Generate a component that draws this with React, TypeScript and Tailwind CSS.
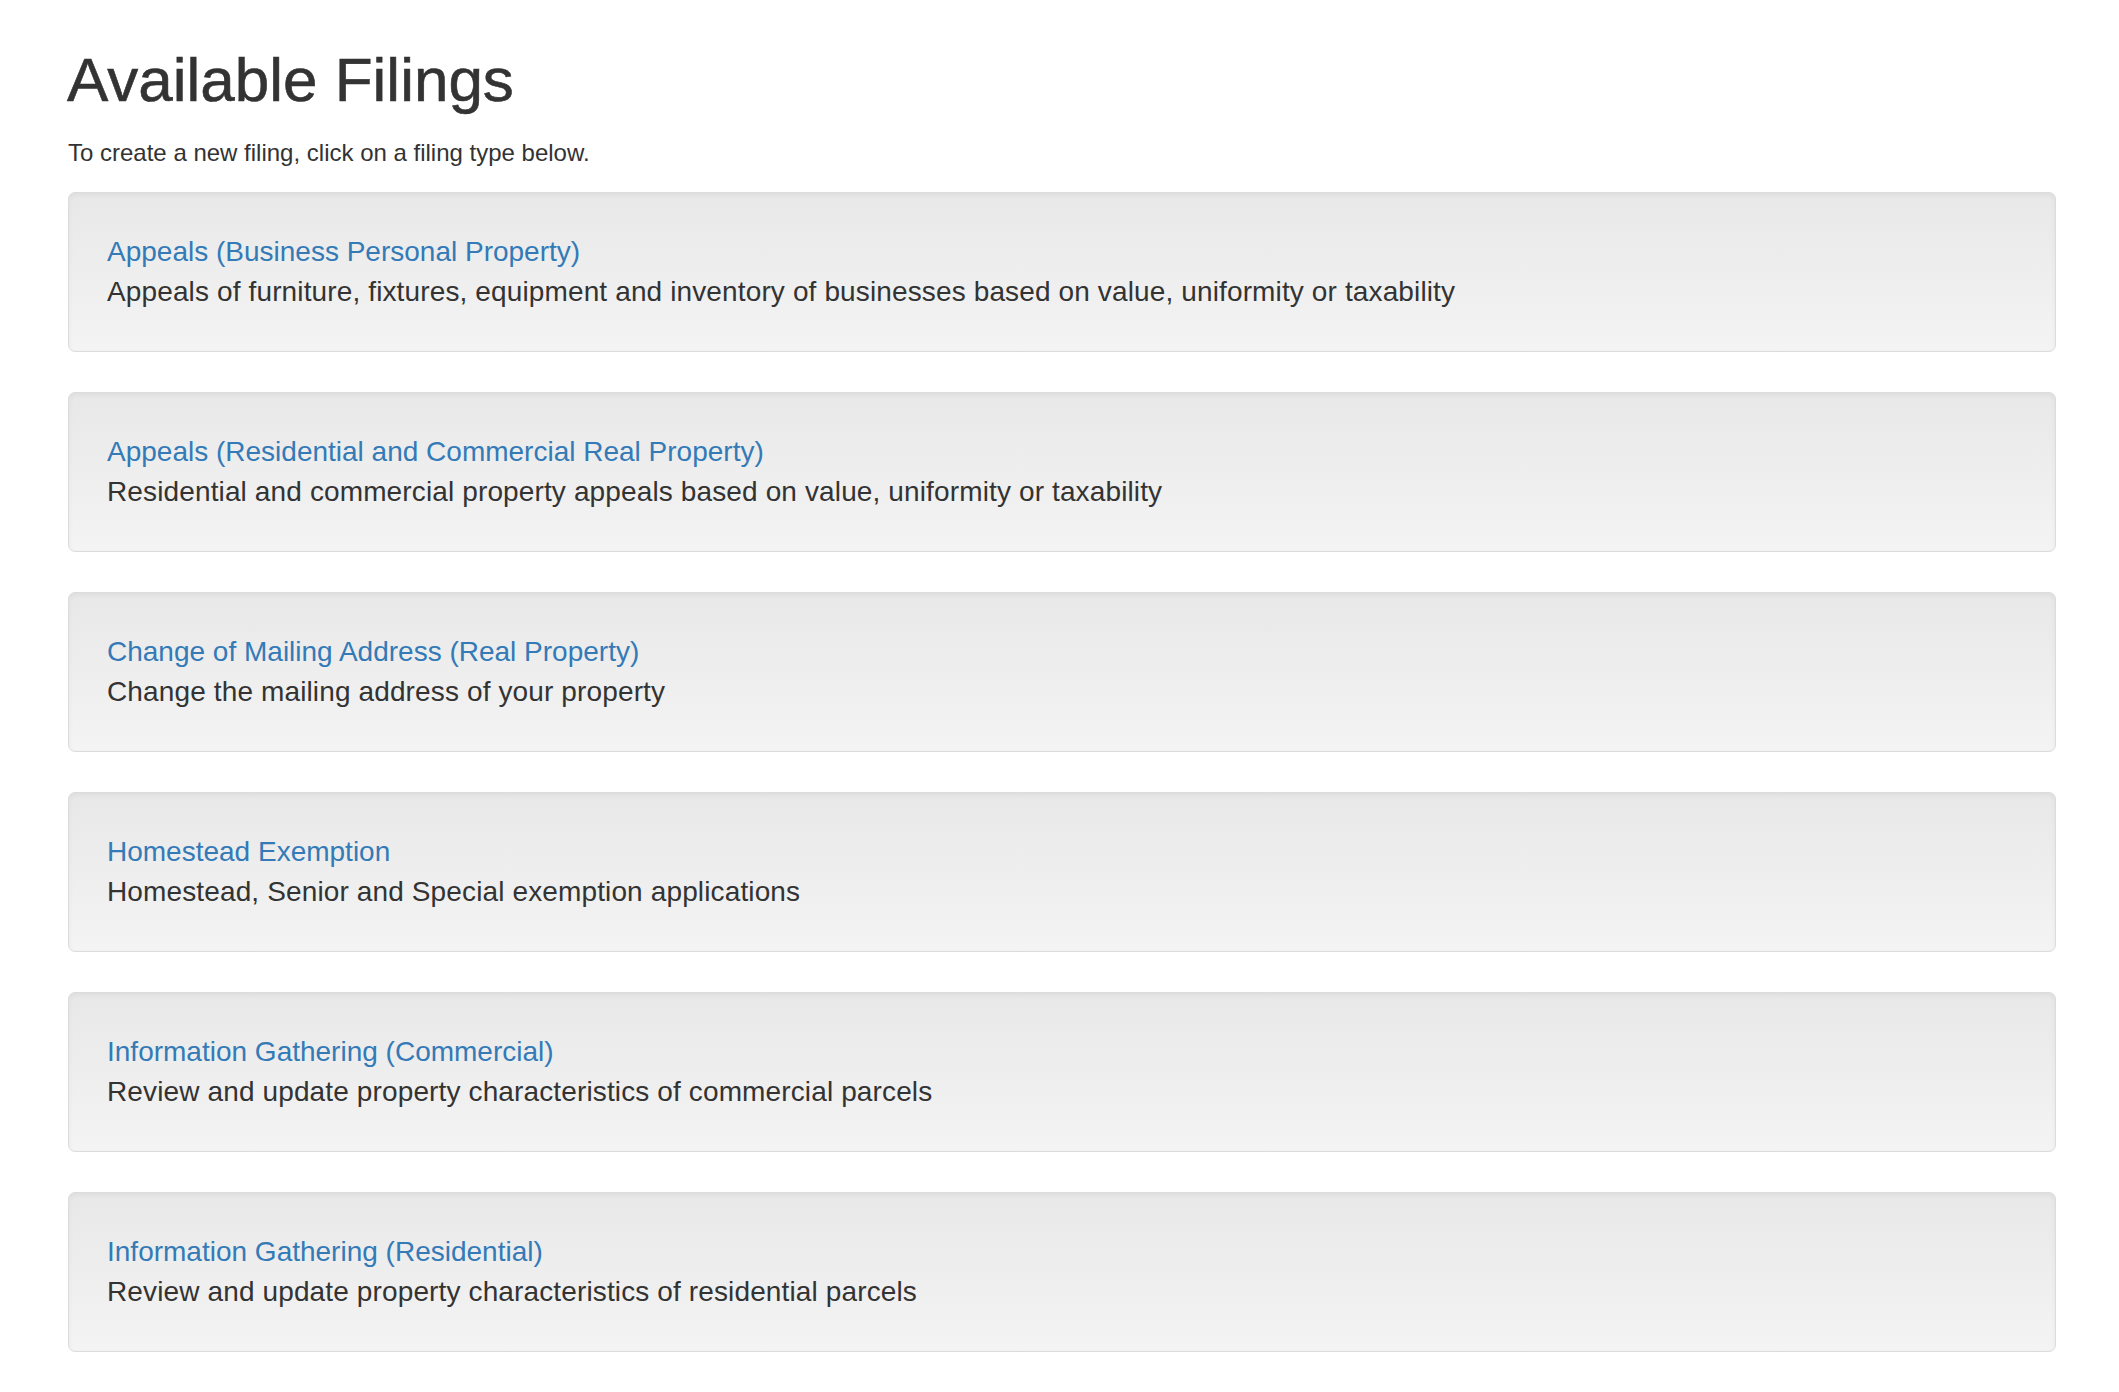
const filings = [
  {
    name: "Appeals (Business Personal Property)",
    description:
      "Appeals of furniture, fixtures, equipment and inventory of businesses based on value, uniformity or taxability",
  },
  {
    name: "Appeals (Residential and Commercial Real Property)",
    description: "Residential and commercial property appeals based on value, uniformity or taxability",
  },
  {
    name: "Change of Mailing Address (Real Property)",
    description: "Change the mailing address of your property",
  },
  {
    name: "Homestead Exemption",
    description: "Homestead, Senior and Special exemption applications",
  },
  {
    name: "Information Gathering (Commercial)",
    description: "Review and update property characteristics of commercial parcels",
  },
  {
    name: "Information Gathering (Residential)",
    description: "Review and update property characteristics of residential parcels",
  },
];

export default function App() {
  return (
    <div className="min-h-screen bg-white pl-[68px] pr-[63px] pt-[46px] pb-[40px] font-['Liberation_Sans',Arial,sans-serif] text-[#333333]">
      <h1 className="text-[62px] leading-[68px] font-medium ml-[-1px] [-webkit-text-stroke:0.6px_#333333]">
        Available Filings
      </h1>
      <p className="mt-[22px] text-[24px] leading-[34px]">To create a new filing, click on a filing type below.</p>

      <div className="mt-[22px] flex flex-col gap-[40px]">
        {filings.map((filing) => (
          <div
            key={filing.name}
            className="rounded-[7px] border border-[#dcdcdc] bg-gradient-to-b from-[#e8e8e8] to-[#f4f4f4] px-[38px] py-[39px] shadow-[inset_0_2px_5px_rgba(0,0,0,0.05)]"
          >
            <a href="#" className="block text-[28px] leading-[40px] text-[#337ab7]">
              {filing.name}
            </a>
            <div className="text-[28px] leading-[40px] tracking-[0.13px] text-[#333333]">{filing.description}</div>
          </div>
        ))}
      </div>
    </div>
  );
}
